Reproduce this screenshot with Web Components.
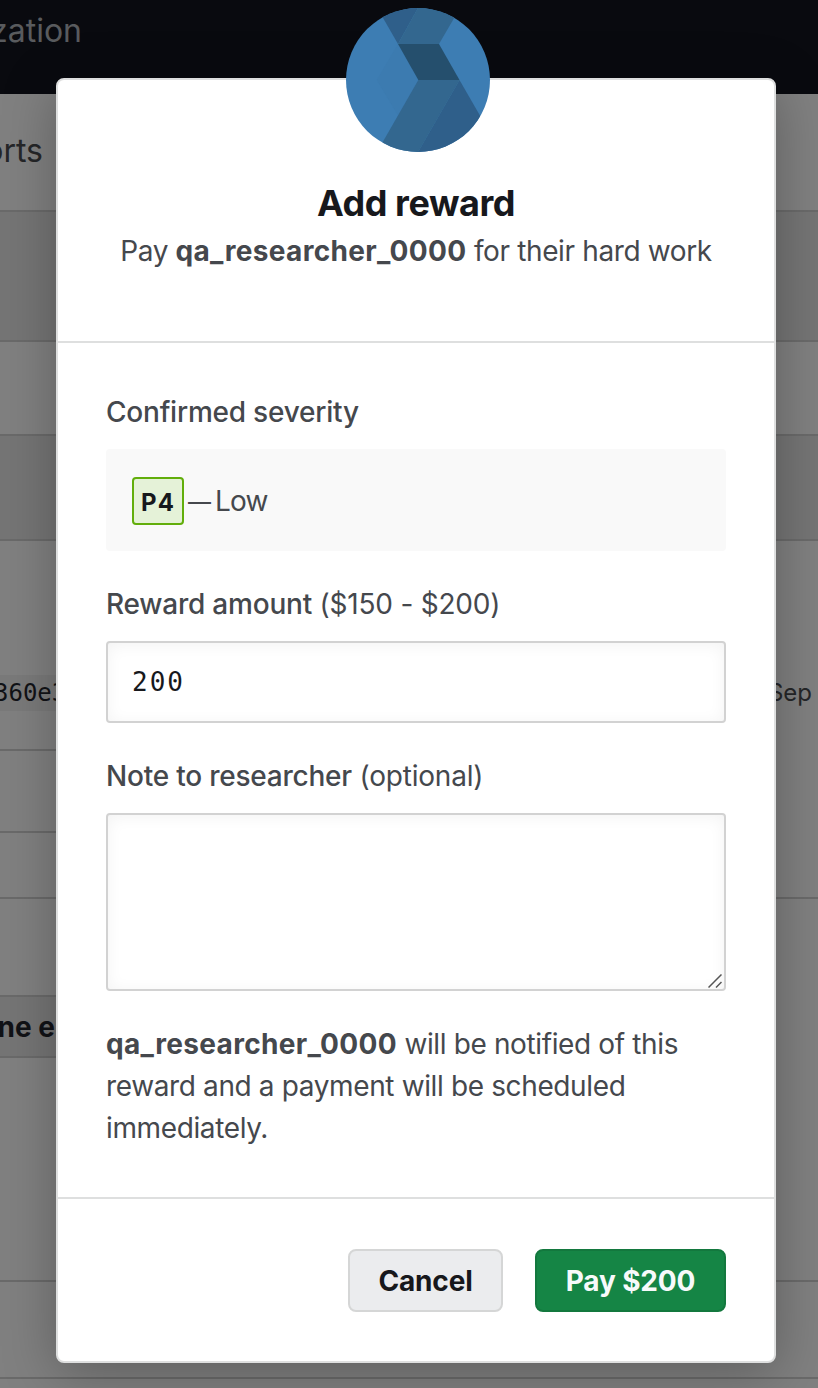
<!DOCTYPE html>
<html lang="en">
<head>
<meta charset="utf-8">
<title>Add reward</title>
<style>
  body {
    margin: 0;
    width: 818px;
    height: 1388px;
    overflow: hidden;
    position: relative;
    background: #808080;
    color: #45484d;
    font: 28px/42px Inter, "Liberation Sans", sans-serif;
  }
  reward-modal { letter-spacing: -.37px; }
  reward-modal b { letter-spacing: .34px; }
</style>
</head>
<body>
<report-page></report-page>
<reward-modal>
  <modal-avatar slot="avatar"></modal-avatar>
  <span slot="title">Add reward</span>
  <span slot="subtitle">Pay <b>qa_researcher_0000</b> for their hard work</span>
  <form-field label="Confirmed severity">
    <severity-box level="P4" name="Low"></severity-box>
  </form-field>
  <form-field label="Reward amount" hint="($150 - $200)">
    <text-box value="200"></text-box>
  </form-field>
  <form-field label="Note to researcher" hint="(optional)">
    <text-box multiline></text-box>
  </form-field>
  <modal-note><b>qa_researcher_0000</b> will be notified of this reward and a payment will be scheduled immediately.</modal-note>
  <action-button slot="actions" style="width: 155px">Cancel</action-button>
  <action-button slot="actions" variant="primary" style="width: 191px">Pay $200</action-button>
</reward-modal>

<script>
class ReportPage extends HTMLElement {
  constructor() {
    super();
    this.attachShadow({ mode: "open" });
  }

  connectedCallback() {
    this.shadowRoot.innerHTML = `
    <style>
      :host { display: block; height: 1388px; overflow: hidden; }
      * { box-sizing: border-box; }
      header { height: 94px; padding-top: 10px; background: #090a0f; color: #595b5e; font-size: 32px; white-space: nowrap; }
      header span, nav span { display: block; text-align: right; }
      header span { width: 82px; direction: rtl; }
      nav { height: 118px; padding-top: 36px; font-size: 32px; color: #252628; }
      nav span { width: 43px; direction: rtl; }
      nav, .band, .row { border-bottom: 2px solid #6a6a6a; }
      .band { background: #757575; }
      .columns { display: grid; grid-template-columns: 416px 1fr; }
      .code { display: flex; align-items: center; height: 36px; margin-top: 134px; background: #7a7a7a; color: #111216; overflow: hidden; }
      .code span { font: 24px/36px "DejaVu Sans Mono", monospace; margin-left: -6px; }
      .title { display: flex; align-items: center; color: #111216; font-weight: 700; }
      .title span { width: 55px; direction: rtl; white-space: nowrap; }
      .date { padding: 131px 6px 0 0; text-align: right; font-size: 24px; color: #252628; }
    </style>
    <header><span>zation</span></header>
    <nav><span>orts</span></nav>
    <div class="band" style="height: 130px"></div>
    <div class="row" style="height: 94px"></div>
    <div class="band" style="height: 105px"></div>
    <div class="columns">
      <div>
        <div class="row" style="height: 210px; padding-top: .1px"><div class="code"><span>360e3</span></div></div>
        <div class="row" style="height: 82px"></div>
        <div class="row" style="height: 66px"></div>
        <div class="row" style="height: 98px"></div>
        <div class="band title" style="height: 61px"><span>ne e</span></div>
        <div class="row" style="height: 224px"></div>
      </div>
      <div>
        <div class="row date" style="height: 358px">Sep</div>
        <div class="row" style="height: 383px"></div>
      </div>
    </div>
    <div class="row" style="height: 97px"></div>`;
  }
}

class RewardModal extends HTMLElement {
  constructor() {
    super();
    this.attachShadow({ mode: "open" });
  }

  connectedCallback() {
    this.shadowRoot.innerHTML = `
    <style>
      :host {
        position: absolute;
        left: 56px;
        top: 78px;
        width: 720px;
        height: 1285px;
        box-sizing: border-box;
        display: flex;
        flex-direction: column;
        background: #fff;
        border: 2px solid #dedfdf;
        border-radius: 8px;
        box-shadow: 0 10px 54px rgba(0, 0, 0, .28);
      }
      header { box-sizing: border-box; height: 263px; padding-top: 97px; text-align: center; border-bottom: 2px solid #dedfdf; }
      h1 { margin: 0; font-size: 36px; line-height: 53px; font-weight: 700; letter-spacing: -.45px; color: #17181c; }
      main { display: flex; flex-direction: column; gap: 32px; padding: 48px; }
      footer { display: flex; flex: 1; justify-content: flex-end; align-items: flex-start; gap: 32px; padding: 50px 48px 0; border-top: 2px solid #dedfdf; }
    </style>
    <slot name="avatar"></slot>
    <header>
      <h1><slot name="title"></slot></h1>
      <slot name="subtitle"></slot>
    </header>
    <main><slot></slot></main>
    <footer><slot name="actions"></slot></footer>`;
  }
}

class ModalAvatar extends HTMLElement {
  constructor() {
    super();
    this.attachShadow({ mode: "open" });
  }

  connectedCallback() {
    this.shadowRoot.innerHTML = `
    <style>
      :host { position: absolute; left: 288px; top: -72px; width: 144px; height: 144px; border-radius: 50%; overflow: hidden; }
      svg { display: block; }
    </style>
    <svg width="144" height="144" viewBox="0 0 144 144">
      <rect width="144" height="144" fill="#3d7db3"/>
      <path d="M52 36 72.3 72 52 107.500 30.700 72z" fill="#3c7bb0"/>
      <path d="M31.300 0H72L52 36z" fill="#2f5f8a"/>
      <path d="M72 0H114L93 36H52z" fill="#33678f"/>
      <path d="M52 36H93L113.500 72H72.300z" fill="#254f6d"/>
      <path d="M72.300 72H113.500L72 144H31z" fill="#33678f"/>
      <path d="M113.500 72 155 144H72z" fill="#2f5f8a"/>
      <path d="M72 0 52 36M113.500 72 72 144" stroke="#3d7191" stroke-width=".4" stroke-dasharray="2 2"/>
    </svg>`;
  }
}

class FormField extends HTMLElement {
  constructor() {
    super();
    this.attachShadow({ mode: "open" });
  }

  connectedCallback() {
    const hint = this.getAttribute("hint") || "";
    this.shadowRoot.innerHTML = `
    <style>
      :host { display: flex; flex-direction: column; gap: 16px; letter-spacing: -.22px; }
      b { font-weight: 500; }
    </style>
    <div><b>${this.getAttribute("label")}</b> ${hint}</div>
    <slot></slot>`;
  }
}

class SeverityBox extends HTMLElement {
  constructor() {
    super();
    this.attachShadow({ mode: "open" });
  }

  connectedCallback() {
    this.shadowRoot.innerHTML = `
    <style>
      :host { display: flex; box-sizing: border-box; align-items: center; height: 102px; padding: 2px 0 0 26px; background: #f9f9f9; border-radius: 4px; }
      .badge {
        box-sizing: border-box;
        width: 52px;
        height: 48px;
        border: 2px solid #62ae0b;
        border-radius: 4px;
        background: #e5f2d8;
        color: #17181c;
        font-size: 24px;
        line-height: 47px;
        font-weight: 700;
        letter-spacing: 1px;
        text-align: center;
      }
      .dash { width: 23px; margin: 2px 4px 0; font-size: 23px; }
      .name { letter-spacing: -.8px; }
    </style>
    <span class="badge">${this.getAttribute("level")}</span>
    <span class="dash">—</span>
    <span class="name">${this.getAttribute("name")}</span>`;
  }
}

class TextBox extends HTMLElement {
  constructor() {
    super();
    this.attachShadow({ mode: "open" });
  }

  connectedCallback() {
    const multiline = this.hasAttribute("multiline");
    const grip = `
      <svg width="14" height="14" viewBox="0 0 14 14" fill="none" stroke="#555" stroke-width="1.500">
        <path d="M.500 13.500 13.500.500M8 13.500 13.500 8"/>
      </svg>`;
    this.shadowRoot.innerHTML = `
    <style>
      :host {
        display: flex;
        box-sizing: border-box;
        height: 82px;
        padding: 0 24px;
        align-items: center;
        border: 2px solid #d2d2d2;
        border-radius: 4px;
        background: #fff;
        box-shadow: inset 0 2px 16px rgba(0, 0, 0, .05);
        color: #17181c;
        font: 26px "DejaVu Sans Mono", monospace;
        letter-spacing: 2px;
      }
      :host([multiline]) { height: 178px; padding: 0 2px 1px 0; align-items: flex-end; justify-content: flex-end; }
    </style>
    ${multiline ? grip : `<span>${this.getAttribute("value")}</span>`}`;
  }
}

class ModalNote extends HTMLElement {
  constructor() {
    super();
    this.attachShadow({ mode: "open" });
  }

  connectedCallback() {
    this.shadowRoot.innerHTML = `
    <style>
      :host { display: block; }
    </style>
    <slot></slot>`;
  }
}

class ActionButton extends HTMLElement {
  constructor() {
    super();
    this.attachShadow({ mode: "open" });
  }

  connectedCallback() {
    this.shadowRoot.innerHTML = `
    <style>
      :host {
        display: flex;
        box-sizing: border-box;
        height: 63px;
        align-items: center;
        justify-content: center;
        border: 2px solid #d5d6d6;
        border-radius: 8px;
        background: #ebecee;
        color: #17181c;
        font-weight: 700;
        letter-spacing: -.15px;
        white-space: nowrap;
      }
      :host([variant="primary"]) { background: #158545; border-color: #13783e; color: #f7fafb; }
    </style>
    <span><slot></slot></span>`;
  }
}

customElements.define("report-page", ReportPage);
customElements.define("reward-modal", RewardModal);
customElements.define("modal-avatar", ModalAvatar);
customElements.define("form-field", FormField);
customElements.define("severity-box", SeverityBox);
customElements.define("text-box", TextBox);
customElements.define("modal-note", ModalNote);
customElements.define("action-button", ActionButton);
</script>
</body>
</html>
